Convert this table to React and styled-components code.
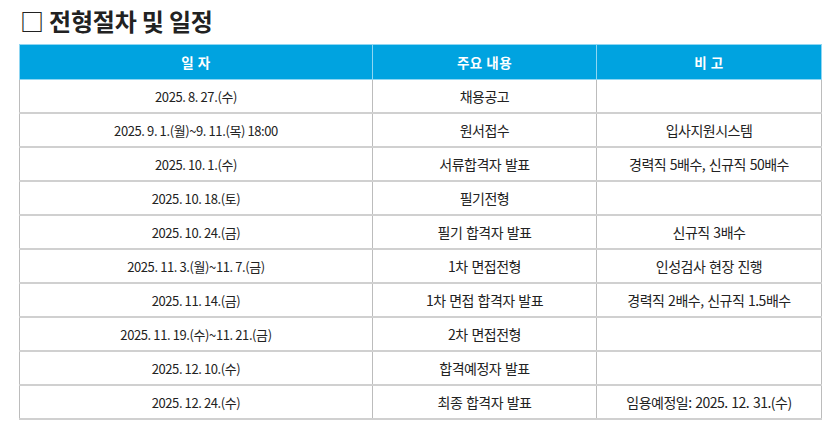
import styled, { createGlobalStyle } from "styled-components";

const Global = createGlobalStyle`
  body {
    margin: 0;
    background: #ffffff;
    font-family: "Noto Sans CJK KR", "Noto Sans", sans-serif;
  }
`;

const Page = styled.div`
  padding: 5px 7px 0 19px;
`;

const Title = styled.h2`
  margin: 0 0 7px 1px;
  font-size: 24px;
  line-height: 32px;
  font-weight: 700;
  color: #222;
  letter-spacing: -0.2px;
`;

const Table = styled.table`
  width: 802px;
  border-collapse: collapse;
  table-layout: fixed;
  font-size: 14px;
  color: #222;
`;

const Th = styled.th`
  background: #00a3e0;
  color: #fff;
  height: 34px;
  font-weight: 700;
  font-size: 13.5px;
  border: 1px solid #8fd6f2;
  padding: 0;
  letter-spacing: 0.5px;
`;

const Td = styled.td`
  height: 32px;
  text-align: center;
  padding: 0;
  font-size: ${(p) => (p.$date ? "13px" : "14px")};
  border-left: 1px solid #bcbcbc;
  border-right: 1px solid #bcbcbc;
  border-bottom: 2px solid #d0d0d0;
  letter-spacing: ${(p) => (p.$date ? "-0.4px" : "-0.5px")};
  word-spacing: ${(p) => (p.$date ? "0" : "1px")};
`;

const rows = [
  ["2025. 8. 27.(수)", "채용공고", ""],
  ["2025. 9. 1.(월)~9. 11.(목) 18:00", "원서접수", "입사지원시스템"],
  ["2025. 10. 1.(수)", "서류합격자 발표", "경력직 5배수, 신규직 50배수"],
  ["2025. 10. 18.(토)", "필기전형", ""],
  ["2025. 10. 24.(금)", "필기 합격자 발표", "신규직 3배수"],
  ["2025. 11. 3.(월)~11. 7.(금)", "1차 면접전형", "인성검사 현장 진행"],
  ["2025. 11. 14.(금)", "1차 면접 합격자 발표", "경력직 2배수, 신규직 1.5배수"],
  ["2025. 11. 19.(수)~11. 21.(금)", "2차 면접전형", ""],
  ["2025. 12. 10.(수)", "합격예정자 발표", ""],
  ["2025. 12. 24.(수)", "최종 합격자 발표", "임용예정일: 2025. 12. 31.(수)"],
];

export default function App() {
  return (
    <Page>
      <Global />
      <Title>□ 전형절차 및 일정</Title>
      <Table>
        <colgroup>
          <col style={{ width: 353 }} />
          <col style={{ width: 224 }} />
          <col style={{ width: 225 }} />
        </colgroup>
        <thead>
          <tr>
            <Th>일 자</Th>
            <Th>주요 내용</Th>
            <Th>비 고</Th>
          </tr>
        </thead>
        <tbody>
          {rows.map((r, i) => (
            <tr key={i}>
              <Td $date>{r[0]}</Td>
              <Td>{r[1]}</Td>
              <Td>{r[2]}</Td>
            </tr>
          ))}
        </tbody>
      </Table>
    </Page>
  );
}
